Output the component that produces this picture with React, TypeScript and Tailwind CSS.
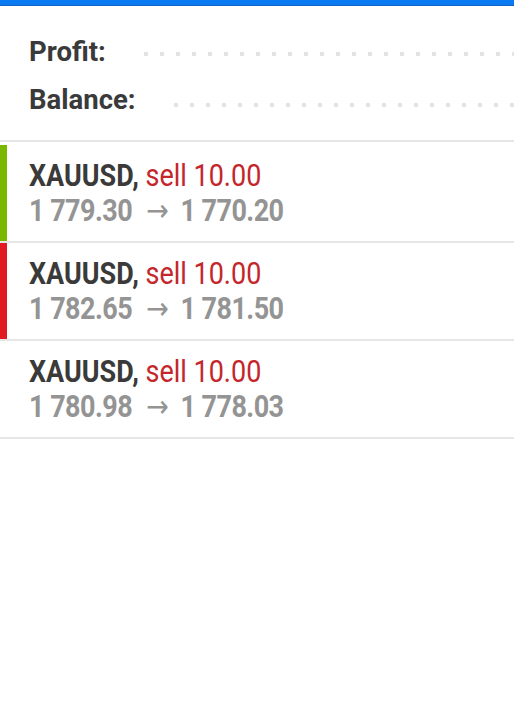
import React from "react";

const rows = [
  { bar: "bg-[#7ab800]", from: "1 779.30", to: "1 770.20" },
  { bar: "bg-[#e01b22]", from: "1 782.65", to: "1 781.50" },
  { bar: "bg-transparent", from: "1 780.98", to: "1 778.03" },
];

function Dots({ className }: { className: string }) {
  return (
    <div
      className={`h-4 flex-1 bg-[radial-gradient(circle,#e2e2e2_2px,transparent_2.6px)] bg-[length:16px_16px] bg-repeat-x ${className}`}
    />
  );
}

export default function App() {
  return (
    <div className="w-[514px] h-[720px] bg-white overflow-hidden font-['Roboto',sans-serif]">
      <div className="h-[6px] bg-[#0a7af3] border-b border-[#1262c4]" />
      <div className="pt-[22px] pb-[16px] pl-[29px] border-b-2 border-[#e6e6e6]">
        <div className="flex items-center h-[48px]">
          <span className="text-[27.5px] leading-[48px] font-bold text-[#3a3a3a]">Profit:</span>
          <Dots className="ml-[32px] mt-1" />
        </div>
        <div className="flex items-center h-[48px]">
          <span className="text-[27.5px] leading-[48px] font-bold text-[#3a3a3a]">Balance:</span>
          <Dots className="ml-[32px] mt-[9px]" />
        </div>
      </div>
      <div className="mt-[3px]">
        {rows.map((r, i) => (
          <div key={i} className="flex h-[98px] border-b-2 border-[#e6e6e6]">
            <div className={`w-[7px] ${r.bar}`} />
            <div className="pl-[22px] py-[14px] flex-1">
              <div className="origin-left scale-x-[0.87] whitespace-nowrap text-[31px] leading-[34px]">
                <div>
                  <span className="font-bold text-[#3a3a3a]">XAUUSD,</span>{" "}
                  <span className="text-[#c4262c]">sell 10.00</span>
                </div>
                <div className="font-bold text-[#949494] tracking-[-0.6px]">
                  {r.from}
                  <span className="inline-block font-normal font-['DejaVu_Sans',sans-serif] text-[31px] ml-[16px] mr-[14px]">→</span>
                  {r.to}
                </div>
              </div>
            </div>
          </div>
        ))}
      </div>
    </div>
  );
}
